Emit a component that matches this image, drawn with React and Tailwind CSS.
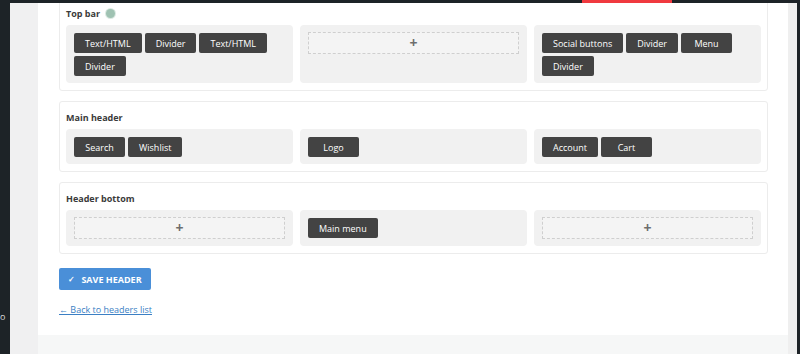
import React from 'react';

// Header builder: rows of three columns with element chips
const rows = [
  {
    title: 'Top bar',
    dot: true,
    cols: [
      ['Text/HTML', 'Divider', 'Text/HTML', 'Divider'],
      null,
      ['Social buttons', 'Divider', 'Menu', 'Divider'],
    ],
  },
  {
    title: 'Main header',
    cols: [['Search', 'Wishlist'], ['Logo'], ['Account', 'Cart']],
  },
  {
    title: 'Header bottom',
    cols: [null, ['Main menu'], null],
  },
];

const Chip = ({ label }) => (
  <span className="h-[20px] min-w-[51px] px-[11px] flex items-center justify-center rounded-[2px] bg-[#434343] text-white text-[9px] leading-none">
    {label}
  </span>
);

const Placeholder = () => (
  <div className="h-[22px] flex-1 flex items-center justify-center border border-dashed border-[#cfcfcf] bg-[#f4f4f4] text-[#6e6e6e] text-[14px] font-bold leading-none">
    +
  </div>
);

const Column = ({ items }) => (
  <div className="rounded-[4px] bg-[#f1f1f1] px-[8px] pt-[7px] pb-[7px] flex">
    {items ? (
      <div className="flex flex-wrap gap-[3px] content-start pt-[1px]">
        {items.map((it, i) => (
          <Chip key={i} label={it} />
        ))}
      </div>
    ) : (
      <Placeholder />
    )}
  </div>
);

const Row = ({ row, first }) => (
  <section
    className={`border border-[#ececec] rounded-[3px] px-[6px] pb-[7px] pt-[8px] ${first ? '-mt-[6px]' : 'mt-[10px]'}`}
  >
    <div className="flex items-center gap-[6px] h-[14px] mb-[5px]">
      <span className="text-[9px] font-bold text-[#3a3a3a] leading-none">{row.title}</span>
      {row.dot && <span className="w-[9px] h-[9px] rounded-full bg-[#9fc2b2] ring-1 ring-[#dbe9e2]" />}
    </div>
    <div className="grid grid-cols-3 gap-[7px]">
      {row.cols.map((c, i) => (
        <Column key={i} items={c} />
      ))}
    </div>
  </section>
);

export default function App() {
  return (
    <div className="w-[800px] h-[354px] overflow-hidden flex flex-col bg-[#1d2327]" style={{ fontFamily: '"Open Sans", sans-serif' }}>
      <div className="h-[3px] flex shrink-0">
        <div className="ml-[582px] w-[90px] bg-[#f0393f]" />
      </div>
      <div className="flex flex-1 min-h-0">
        <div className="w-[10px] bg-[#1d2327] relative">
          <span className="absolute left-0 top-[309px] text-[9px] text-[#dcdcdc] leading-none">o</span>
        </div>
        <div className="w-[28px] bg-[#f0f0f1]" />
        <div className="flex-1 flex flex-col bg-white min-w-0">
          <div className="flex-1 overflow-hidden pl-[21px] pr-[20px]">
            {rows.map((r, i) => (
              <Row key={i} row={r} first={i === 0} />
            ))}
            <button className="mt-[14px] h-[22px] w-[92px] flex items-center justify-center gap-[6px] rounded-[2px] bg-[#4a8fd8] text-white text-[9px] font-bold uppercase leading-none">
              <span className="text-[8px]">✓</span>
              <span>Save header</span>
            </button>
            <a href="#" className="block mt-[15px] text-[9px] text-[#3b7fc4] underline leading-none">
              ← Back to headers list
            </a>
          </div>
          <div className="h-[19px] bg-[#f6f7f7] shrink-0" />
        </div>
        <div className="w-[9px] bg-[#efefef]" />
        <div className="w-[3px] bg-[#1d2327]" />
      </div>
    </div>
  );
}
